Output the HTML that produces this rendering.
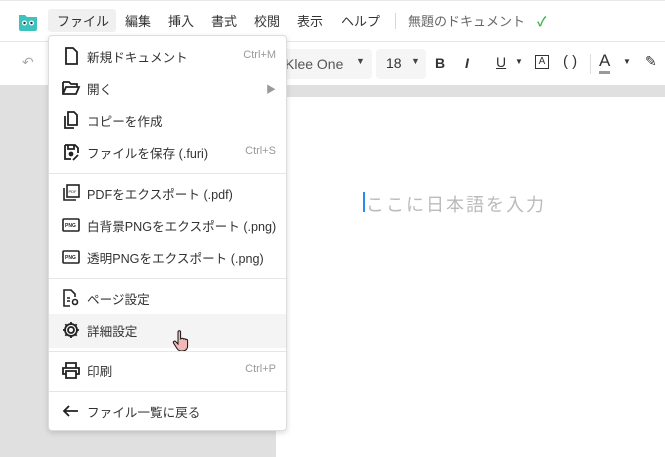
<!DOCTYPE html>
<html><head><meta charset="utf-8"><style>
*{margin:0;padding:0;box-sizing:border-box}
body{width:665px;height:450px;overflow:hidden;font-family:"Liberation Sans","Noto Sans CJK JP",sans-serif;background:#e0e0e0;position:relative;color:#333}
.top{position:absolute;left:0;top:0;width:665px;height:42px;background:#fff;border-bottom:1px solid #e6e6e6;border-top:1px solid #e8e8e8}
.tb{position:absolute;left:0;top:42px;width:665px;height:43px;background:#fff}
.m{position:absolute;top:10px;font-size:13px;color:#333}
.paper{position:absolute;left:276px;top:97px;width:400px;height:360px;background:#fff}
.menu{position:absolute;left:48px;top:35px;width:239px;height:396px;background:#fff;border:1px solid #ddd;border-radius:4px;box-shadow:0 2px 6px rgba(0,0,0,.15)}
.it{position:absolute;left:0;width:237px;height:32px;font-size:12.6px;color:#333}
.it .t{position:absolute;left:38px;top:6px;white-space:nowrap}
.it .k{position:absolute;right:10px;top:8px;font-size:11px;color:#999}
.it svg{position:absolute;left:12px;top:5px}
.sep{position:absolute;left:0;width:237px;height:1px;background:#e6e6e6}
</style></head><body>
<div class="top">
<svg style="position:absolute;left:17px;top:9px" width="22" height="22" viewBox="0 0 22 22"><path d="M2 5h6l2 2h10v12a2 2 0 0 1-2 2H4a2 2 0 0 1-2-2z" fill="#3cc3bd"/><circle cx="7.5" cy="13" r="2.5" fill="#fff"/><circle cx="14.5" cy="13" r="2.5" fill="#fff"/><circle cx="7.5" cy="13" r="1.2" fill="#234"/><circle cx="14.5" cy="13" r="1.2" fill="#234"/></svg>
<div style="position:absolute;left:48px;top:8px;width:68px;height:23px;background:#f0f0f0;border-radius:3px"></div>
<span class="m" style="left:57px">ファイル</span>
<span class="m" style="left:125px">編集</span>
<span class="m" style="left:168px">挿入</span>
<span class="m" style="left:211px">書式</span>
<span class="m" style="left:254px">校閲</span>
<span class="m" style="left:297px">表示</span>
<span class="m" style="left:341px">ヘルプ</span>
<div style="position:absolute;left:395px;top:12px;width:1px;height:16px;background:#f0d0b0"></div>
<span class="m" style="left:408px;color:#666">無題のドキュメント</span>
<span class="m" style="left:537px;color:#3bb54a;font-weight:bold">✓</span>
</div>
<div class="tb">
<span style="position:absolute;left:22px;top:12px;color:#aaa;font-size:14px">↶</span>
<div style="position:absolute;left:280px;top:7px;width:92px;height:30px;background:#f5f5f5;border-radius:4px"></div>
<span style="position:absolute;left:285px;top:14px;font-size:14px;color:#555">Klee One</span>
<span style="position:absolute;left:356px;top:14px;font-size:9px;color:#444">▼</span>
<div style="position:absolute;left:376px;top:7px;width:50px;height:30px;background:#f5f5f5;border-radius:4px"></div>
<span style="position:absolute;left:386px;top:13px;font-size:14px;color:#333">18</span>
<span style="position:absolute;left:411px;top:14px;font-size:9px;color:#444">▼</span>
<span style="position:absolute;left:435px;top:13px;font-size:14px;font-weight:bold">B</span>
<span style="position:absolute;left:465px;top:13px;font-size:14px;font-style:italic;font-weight:bold">I</span>
<span style="position:absolute;left:496px;top:12px;font-size:14px;text-decoration:underline">U</span>
<span style="position:absolute;left:515px;top:15px;font-size:8px">▼</span>
<span style="position:absolute;left:535px;top:13px;width:14px;height:14px;border:1.5px solid #333;font-size:10px;text-align:center;line-height:11px">A</span>
<span style="position:absolute;left:563px;top:11px;font-size:15px">( )</span>
<div style="position:absolute;left:590px;top:12px;width:1px;height:20px;background:#ddd"></div>
<span style="position:absolute;left:599px;top:9px;font-size:17px;border-bottom:3px solid #999;line-height:20px">A</span>
<span style="position:absolute;left:623px;top:15px;font-size:8px">▼</span>
<span style="position:absolute;left:645px;top:11px;font-size:14px">✎</span>
</div>
<div class="paper"><div style="position:absolute;left:87px;top:95px;width:2px;height:20px;background:#2a8bf2"></div><span style="position:absolute;left:90px;top:94px;font-size:18px;color:#bbb;letter-spacing:2px">ここに日本語を入力</span></div>
<div class="menu">
<div class="it" style="top:5px"><svg width="20" height="20" viewBox="0 0 20 20" fill="none" stroke="#222" stroke-width="1.8"><path d="M5 2h7l4 4v12H5z"/></svg><span class="t">新規ドキュメント</span><span class="k">Ctrl+M</span></div>
<div class="it" style="top:37px"><svg width="20" height="20" viewBox="0 0 20 20" fill="none" stroke="#222" stroke-width="1.8"><path d="M2 4h6l2 2h6v3M2 4v12h13l3-7H5l-3 7"/></svg><span class="t">開く</span><span class="k" style="font-size:10px">▶</span></div>
<div class="it" style="top:69px"><svg width="20" height="20" viewBox="0 0 20 20" fill="none" stroke="#222" stroke-width="1.8"><path d="M7 2h6l3 3v10H7zM4 6v12h9"/></svg><span class="t">コピーを作成</span></div>
<div class="it" style="top:101px"><svg width="20" height="20" viewBox="0 0 20 20" fill="none" stroke="#222" stroke-width="1.8"><path d="M4 3h10l3 3v5M4 3v14h6M7 3v4h6V3"/><circle cx="10" cy="12" r="1.5" fill="#222"/><path d="M12 18l5-5"/></svg><span class="t">ファイルを保存 (.furi)</span><span class="k">Ctrl+S</span></div>
<div class="sep" style="top:137px"></div>
<div class="it" style="top:142px"><svg width="20" height="20" viewBox="0 0 20 20" fill="none" stroke="#222" stroke-width="1.6"><rect x="6" y="2" width="12" height="12"/><path d="M3 5v12h12"/><text x="7.5" y="10" font-size="4" fill="#222" stroke="none">PDF</text></svg><span class="t">PDFをエクスポート (.pdf)</span></div>
<div class="it" style="top:174px"><svg width="20" height="20" viewBox="0 0 20 20" fill="none" stroke="#222" stroke-width="1.6"><rect x="2" y="4" width="16" height="12" rx="1"/><text x="4" y="12" font-size="5" font-weight="bold" fill="#222" stroke="none">PNG</text></svg><span class="t">白背景PNGをエクスポート (.png)</span></div>
<div class="it" style="top:206px"><svg width="20" height="20" viewBox="0 0 20 20" fill="none" stroke="#222" stroke-width="1.6"><rect x="2" y="4" width="16" height="12" rx="1"/><text x="4" y="12" font-size="5" font-weight="bold" fill="#222" stroke="none">PNG</text></svg><span class="t">透明PNGをエクスポート (.png)</span></div>
<div class="sep" style="top:242px"></div>
<div class="it" style="top:247px"><svg width="20" height="20" viewBox="0 0 20 20" fill="none" stroke="#222" stroke-width="1.6"><path d="M9 18H3V2h7l4 4v3"/><path d="M6 10h3M6 13h3"/><circle cx="14" cy="14" r="2.5"/></svg><span class="t">ページ設定</span></div>
<div style="position:absolute;left:0;top:278px;width:237px;height:34px;background:#f4f4f4"></div>
<div class="it" style="top:279px"><svg width="20" height="20" viewBox="0 0 20 20" fill="none" stroke="#222" stroke-width="1.8"><circle cx="10" cy="10" r="3"/><path d="M10 2v3M10 15v3M2 10h3M15 10h3M4.3 4.3l2.1 2.1M13.6 13.6l2.1 2.1M4.3 15.7l2.1-2.1M13.6 6.4l2.1-2.1"/><circle cx="10" cy="10" r="6"/></svg><span class="t">詳細設定</span></div>
<svg style="position:absolute;left:123px;top:294px" width="18" height="22" viewBox="0 0 18 22"><path d="M6 2a1.3 1.3 0 0 1 2.6 0v7l1-.5a1.3 1.3 0 0 1 2 .5 1.3 1.3 0 0 1 2 .5 1.3 1.3 0 0 1 2 .8V16c0 3-2 5-5 5H9c-2 0-3-1-4-2.5L1.5 13a1.3 1.3 0 0 1 2-1.6L6 14z" fill="#f2b8b8" stroke="#111" stroke-width="1"/></svg>
<div class="sep" style="top:315px"></div>
<div class="it" style="top:319px"><svg width="20" height="20" viewBox="0 0 20 20" fill="none" stroke="#222" stroke-width="1.8"><path d="M5 8V3h10v5M5 14H2V8h16v6h-3M5 11h10v7H5z"/></svg><span class="t">印刷</span><span class="k">Ctrl+P</span></div>
<div class="sep" style="top:355px"></div>
<div class="it" style="top:360px"><svg width="20" height="20" viewBox="0 0 20 20" fill="none" stroke="#222" stroke-width="1.8"><path d="M17 10H3M8 5l-5 5 5 5"/></svg><span class="t">ファイル一覧に戻る</span></div>
</div>
</body></html>
